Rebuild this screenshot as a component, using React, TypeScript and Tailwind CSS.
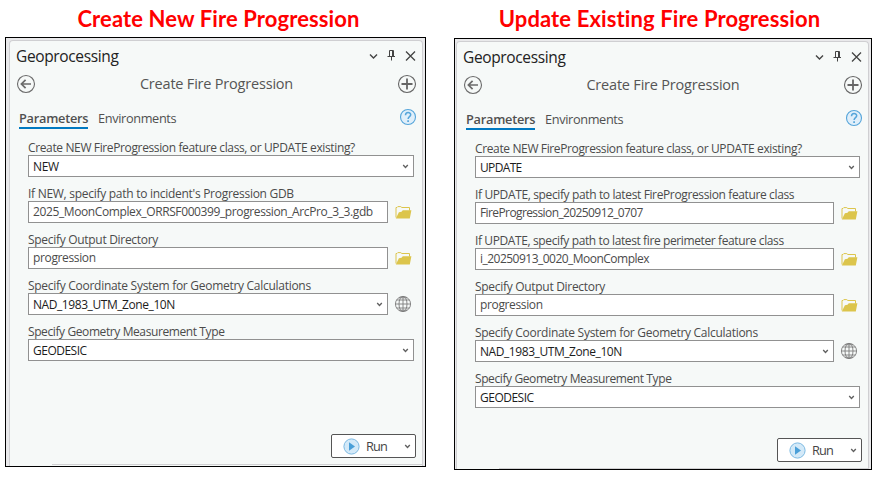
import React from "react";

type FieldKind = "select" | "folder" | "globe";
type Field = { label: string; value: string; kind: FieldKind; labelClass?: string; valueClass?: string };

const Chevron = ({ className = "" }: { className?: string }) => (
  <svg className={className} width="7" height="5" viewBox="0 0 7 5" fill="none" stroke="#606060" strokeWidth="1.4">
    <path d="M1.2 1.1 3.5 3.4l2.3-2.3" />
  </svg>
);

const Folder = () => (
  <svg width="17" height="13" viewBox="0 0 17 13">
    <path d="M1 11.5V1.5h1l.8-.9h3l1 .9h7.7v3" fill="none" stroke="#dcc54c" />
    <path d="M.8 12.4 3.9 6.2l2.6-.4 1.3-1.5h8.6l-1.6 8.1z" fill="#dcc54c" />
  </svg>
);

const Globe = () => (
  <svg width="18" height="18" viewBox="0 0 18 18" fill="none" stroke="#7d7d7d" strokeWidth=".9">
    <circle cx="9" cy="9" r="7.6" />
    <ellipse cx="9" cy="9" rx="4" ry="7.6" />
    <path d="M9 1.4v15.2M1.4 9h15.2M2.6 5h12.8M2.6 13h12.8M5 2.8h8M5 15.2h8" />
  </svg>
);

const Back = () => (
  <svg width="20" height="20" viewBox="0 0 20 20" fill="none" stroke="#6b6b6b">
    <circle cx="10" cy="10" r="8.5" strokeWidth="1.1" />
    <path d="M15 10H6M9.6 5.8 5.4 10l4.2 4.2" strokeWidth="1.7" />
  </svg>
);

const Plus = () => (
  <svg width="20" height="20" viewBox="0 0 20 20" fill="none" stroke="#666">
    <circle cx="10" cy="10" r="8.5" strokeWidth="1.1" />
    <path d="M10 4.5v11M4.5 10h11" strokeWidth="1.8" />
  </svg>
);

const Help = () => (
  <svg className="mt-[2px]" width="18" height="18" viewBox="0 0 18 18" fill="none" stroke="#55a5da">
    <circle cx="9" cy="9" r="7.5" fill="#e0effa" strokeWidth="1.1" />
    <path d="M6.5 7.2c0-3.6 5.2-3.4 5.2-.5 0 1.9-2.6 2-2.6 4.2" strokeWidth="1.5" />
    <path d="M9.1 12.2v1.7" strokeWidth="1.7" />
  </svg>
);

const Play = () => (
  <svg width="17" height="17" viewBox="0 0 17 17">
    <circle cx="8.5" cy="8.5" r="7.6" fill="#d3e9f8" stroke="#7cb9e2" />
    <path d="M6 4.2v8.6l6-4.3z" fill="#4a9fd8" />
  </svg>
);

const WindowButtons = () => (
  <svg width="48" height="14" viewBox="0 0 48 14" fill="none" stroke="#444">
    <path d="m2 5.5 3.5 3.5L9 5.5" strokeWidth="1.4" />
    <path d="M21.5 7.5v-6h4v6M19.5 7.5h7.5M23.5 7.5v4" />
    <path d="M24.5 1.5v6" />
    <path d="m38 2.5 9 9M47 2.5l-9 9" strokeWidth="1.3" />
  </svg>
);

function FieldRow({ f }: { f: Field }) {
  const hasArrow = f.kind !== "folder";
  return (
    <div className="flex h-[46px] flex-col">
      <div className="flex h-6 items-end">
        <span className={`-mb-[2px] whitespace-nowrap text-[12px] leading-[18px] text-[#4b4b4b] ${f.labelClass ?? ""}`}>{f.label}</span>
      </div>
      <div className="flex h-[22px] shrink-0 items-center">
        <div className="flex h-[22px] min-w-0 flex-1 items-center justify-between border border-[#919191] bg-white pr-[4px] pl-[4px]">
          <span className={`whitespace-nowrap text-[12px] leading-[18px] ${hasArrow ? "pt-[2px] text-[#1c1c1c]" : "text-[#4b4b4b]"} ${f.valueClass ?? ""}`}>{f.value}</span>
          {hasArrow && <Chevron />}
        </div>
        {f.kind !== "select" && (
          <div className="flex w-[26px] items-center justify-end pr-px">
            <div className="flex w-[20px] justify-center">{f.kind === "folder" ? <Folder /> : <Globe />}</div>
          </div>
        )}
      </div>
    </div>
  );
}

function Pane({ fields, frame, inner, foot }: { fields: Field[]; frame: string; inner: string; foot: string }) {
  return (
    <section className={`flex shrink-0 flex-col border border-black bg-[#e9e9eb] ${frame}`}>
      <div className={`flex min-h-0 flex-1 flex-col rounded-t-[4px] border border-b-0 border-[#cfcfd2] bg-[#f6f9f8] ${inner}`}>
        <div className="flex h-[30px] items-center justify-between pr-[6px]">
          <h2 className="pl-[6px] text-[15.5px] leading-5 tracking-[-0.36px] text-[#222]">Geoprocessing</h2>
          <WindowButtons />
        </div>
        <div className="flex h-[26px] items-center justify-between pr-[5px] pl-[6px]">
          <Back />
          <h3 className="text-[14.5px] leading-5 tracking-[-0.2px] text-[#555]">Create Fire Progression</h3>
          <Plus />
        </div>
        <div className="mt-[9px] flex h-[23px] items-start justify-between pr-[5px] pl-[9px]">
          <div className="flex gap-[10px] text-[12.75px] leading-[24px] text-[#505050]">
            <span className="h-[23px] w-[69px] border-b-2 border-[#0079c1] font-semibold tracking-[-0.25px]">Parameters</span>
            <span className="tracking-[-0.36px]">Environments</span>
          </div>
          <Help />
        </div>
        <div className="mt-[2px] flex flex-col pr-[8px] pl-[18px]">
          {fields.map((f) => <FieldRow key={f.label} f={f} />)}
        </div>
        <div className="min-h-0 flex-1" />
        <button className="mr-[6px] mb-[6px] flex h-[24px] w-[85px] shrink-0 items-center self-end rounded-[2px] border border-[#555] bg-white pr-[4px] pl-[11px]">
          <Play />
          <span className="ml-[6px] text-[12.75px] leading-5 tracking-[-0.8px] text-[#444]">Run</span>
          <Chevron className="ml-auto" />
        </button>
        <div className={`h-px shrink-0 bg-[#d0d0d2] ${foot}`} />
      </div>
    </section>
  );
}

const modeLabel = { label: "Create NEW FireProgression feature class, or UPDATE existing?", labelClass: "tracking-[-0.37px]" };

const commonFields: Field[] = [
  { label: "Specify Output Directory", value: "progression", kind: "folder", labelClass: "tracking-[-0.3px]", valueClass: "tracking-[-0.36px]" },
  { label: "Specify Coordinate System for Geometry Calculations", value: "NAD_1983_UTM_Zone_10N", kind: "globe", labelClass: "tracking-[-0.285px]", valueClass: "tracking-[-0.43px]" },
  { label: "Specify Geometry Measurement Type", value: "GEODESIC", kind: "select", labelClass: "tracking-[-0.4px]", valueClass: "tracking-[-0.5px]" },
];

const createFields: Field[] = [
  { ...modeLabel, value: "NEW", kind: "select", valueClass: "tracking-[-0.4px]" },
  { label: "If NEW, specify path to incident's Progression GDB", value: "2025_MoonComplex_ORRSF000399_progression_ArcPro_3_3.gdb", kind: "folder", labelClass: "tracking-[-0.28px]", valueClass: "tracking-[-0.39px]" },
  ...commonFields,
];

const updateFields: Field[] = [
  { ...modeLabel, value: "UPDATE", kind: "select", valueClass: "tracking-[-0.65px]" },
  { label: "If UPDATE, specify path to latest FireProgression feature class", value: "FireProgression_20250912_0707", kind: "folder", labelClass: "tracking-[-0.37px]", valueClass: "tracking-[-0.6px]" },
  { label: "If UPDATE, specify path to latest fire perimeter feature class", value: "i_20250913_0020_MoonComplex", kind: "folder", labelClass: "tracking-[-0.385px]", valueClass: "tracking-[-0.52px]" },
  ...commonFields,
];

export default function App() {
  return (
    <main className="flex h-[485px] w-[877px] gap-[28px] overflow-hidden bg-white pl-[5px] font-['Open_Sans','Noto_Sans',sans-serif]">
      <div className="flex w-[421px] shrink-0 flex-col">
        <h1 className="flex h-[37px] items-center justify-center pl-[6px] font-['Lato',sans-serif] text-[22px] font-bold tracking-[0.11px] whitespace-nowrap text-[#ff0000]">Create New Fire Progression</h1>
        <Pane fields={createFields} frame="h-[430px]" inner="ml-[3px] mr-[2px] mt-[2px]" foot="ml-[42px] mb-px" />
      </div>
      <div className="flex w-[418px] shrink-0 flex-col">
        <h1 className="flex h-[38px] items-center justify-center pr-[7px] pb-px font-['Lato',sans-serif] text-[22px] font-bold tracking-[0.12px] whitespace-nowrap text-[#ff0000]">Update Existing Fire Progression</h1>
        <Pane fields={updateFields} frame="h-[432px]" inner="ml-[1px] mr-[2px] mt-[2px]" foot="ml-[42px]" />
      </div>
    </main>
  );
}
